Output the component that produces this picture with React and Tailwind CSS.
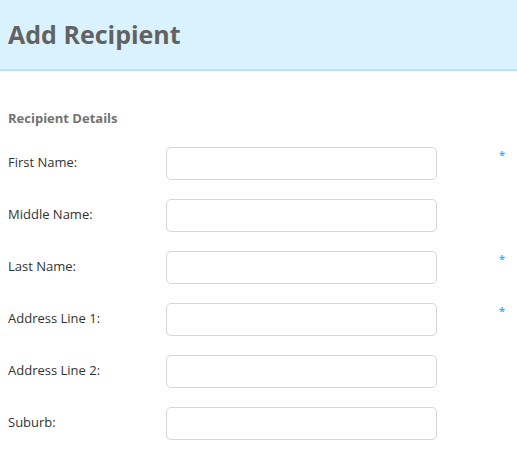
const fields = [
  { label: 'First Name:', required: true },
  { label: 'Middle Name:' },
  { label: 'Last Name:', required: true },
  { label: 'Address Line 1:', required: true },
  { label: 'Address Line 2:' },
  { label: 'Suburb:' },
];

const FieldRow = ({ label, required }) => (
  <div className="mb-[19px] flex h-[33px] items-center">
    <label className="w-[158px] text-[13px] text-[#333]">{label}</label>
    <input type="text" className="h-[33px] w-[271px] rounded-[5px] border border-[#d6d6d6] bg-white px-2 outline-none" />
    {required ? (
      <span className="ml-auto mr-[4px] mt-[2px] self-start text-[11px] font-bold leading-none text-[#3fb2f0]">*</span>
    ) : null}
  </div>
);

export default function App() {
  return (
    <div className="h-[450px] w-[517px] overflow-hidden bg-white font-['Open_Sans',sans-serif]">
      <header className="flex h-[71px] items-center border-b-2 border-[#b6e3fa] bg-[#daf2fd] px-2">
        <h1 className="text-[25px] font-bold text-[#626262]">Add Recipient</h1>
      </header>
      <section className="px-2 pt-[38px]">
        <h2 className="mb-[18px] text-[13px] font-bold text-[#737373]">Recipient Details</h2>
        {fields.map((f) => (
          <FieldRow key={f.label} {...f} />
        ))}
      </section>
    </div>
  );
}
